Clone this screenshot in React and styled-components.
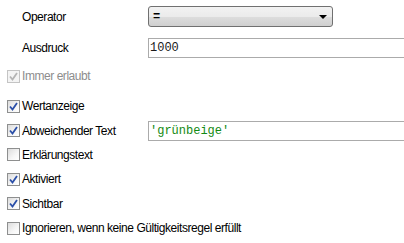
import styled, { createGlobalStyle } from 'styled-components';

const GlobalStyle = createGlobalStyle`
   html, body {
      margin: 0;
      padding: 0;
      background: #fff;
   }
   body {
      font-family: 'Liberation Sans', Arial, sans-serif;
      font-size: 12px;
      color: #000;
   }
`;

const CheckMark = ({ color }) => (
   <svg width="9" height="9" viewBox="0 0 9 9">
      <path d="M1 4.5 L3.5 7.5 L8 1" fill="none" stroke={color} strokeWidth="1.8" />
   </svg>
);

const Checkbox = ({ checked, disabled }) => (
   <Box $disabled={disabled}>
      {checked && <CheckMark color={disabled ? '#b4b4b4' : '#2b4fa8'} />}
   </Box>
);

export default function App() {
   return (
      <>
         <GlobalStyle />
         <Panel>
            <FieldRow $height={21}>
               <FieldLabel>Operator</FieldLabel>
               <Select>
                  <span>=</span>
                  <Arrow />
               </Select>
            </FieldRow>
            <FieldRow $height={20} $top={11}>
               <FieldLabel>Ausdruck</FieldLabel>
               <TextInput $color="#1a1a1a">1000</TextInput>
            </FieldRow>

            <CheckList>
               <CheckRow $height={36}>
                  <Checkbox checked disabled />
                  <CheckLabel $disabled>Immer erlaubt</CheckLabel>
               </CheckRow>
               <CheckRow>
                  <Checkbox checked />
                  <CheckLabel>Wertanzeige</CheckLabel>
               </CheckRow>
               <CheckRow $withInput>
                  <Checkbox checked />
                  <CheckLabel>Abweichender Text</CheckLabel>
                  <TextInput $color="#138a13">'grünbeige'</TextInput>
               </CheckRow>
               <CheckRow>
                  <Checkbox />
                  <CheckLabel>Erklärungstext</CheckLabel>
               </CheckRow>
               <CheckRow>
                  <Checkbox checked />
                  <CheckLabel>Aktiviert</CheckLabel>
               </CheckRow>
               <CheckRow>
                  <Checkbox checked />
                  <CheckLabel>Sichtbar</CheckLabel>
               </CheckRow>
               <CheckRow>
                  <Checkbox />
                  <CheckLabel>Ignorieren, wenn keine Gültigkeitsregel erfüllt</CheckLabel>
               </CheckRow>
            </CheckList>
         </Panel>
      </>
   );
}

const Panel = styled.div`
   width: 404px;
   height: 243px;
   padding-top: 6px;
   box-sizing: border-box;
   overflow: hidden;
`;

const FieldRow = styled.div`
   display: grid;
   grid-template-columns: 148px 1fr;
   align-items: center;
   height: ${(p) => p.$height}px;
   margin-top: ${(p) => p.$top || 0}px;
`;

const FieldLabel = styled.div`
   padding-left: 22px;
   letter-spacing: -0.45px;
`;

const Select = styled.div`
   width: 185px;
   height: 21px;
   box-sizing: border-box;
   border: 1px solid #707070;
   border-radius: 3px;
   background: linear-gradient(#f2f2f2, #ebebeb 50%, #dddddd 51%, #cfcfcf);
   display: flex;
   align-items: center;
   justify-content: space-between;
   padding: 0 5px 0 4px;
   font-family: 'Liberation Mono', monospace;
   font-weight: bold;
`;

const Arrow = styled.span`
   width: 0;
   height: 0;
   border-left: 4px solid transparent;
   border-right: 4px solid transparent;
   border-top: 4px solid #000;
`;

const TextInput = styled.div`
   height: 20px;
   box-sizing: border-box;
   border: 1px solid #ababab;
   border-right: none;
   display: flex;
   align-items: center;
   padding-left: 1px;
   font-family: 'Liberation Mono', monospace;
   color: ${(p) => p.$color};
`;

const CheckList = styled.div`
   margin-top: 0;
`;

const CheckRow = styled.div`
   display: grid;
   grid-template-columns: ${(p) => (p.$withInput ? '13px 124px 1fr' : '13px 1fr')};
   align-items: center;
   column-gap: 2px;
   padding-left: 7px;
   height: ${(p) => p.$height || 24.4}px;
`;

const Box = styled.span`
   width: 13px;
   height: 13px;
   box-sizing: border-box;
   border: 1px solid ${(p) => (p.$disabled ? '#c4c4c4' : '#8e8f8f')};
   background: ${(p) =>
      p.$disabled ? '#f4f4f4' : 'linear-gradient(135deg, #dcdcdc, #f6f6f6 60%, #ffffff)'};
   display: flex;
   align-items: center;
   justify-content: center;
`;

const CheckLabel = styled.span`
   color: ${(p) => (p.$disabled ? '#8d8d8d' : '#000')};
   white-space: nowrap;
   letter-spacing: -0.45px;
`;
